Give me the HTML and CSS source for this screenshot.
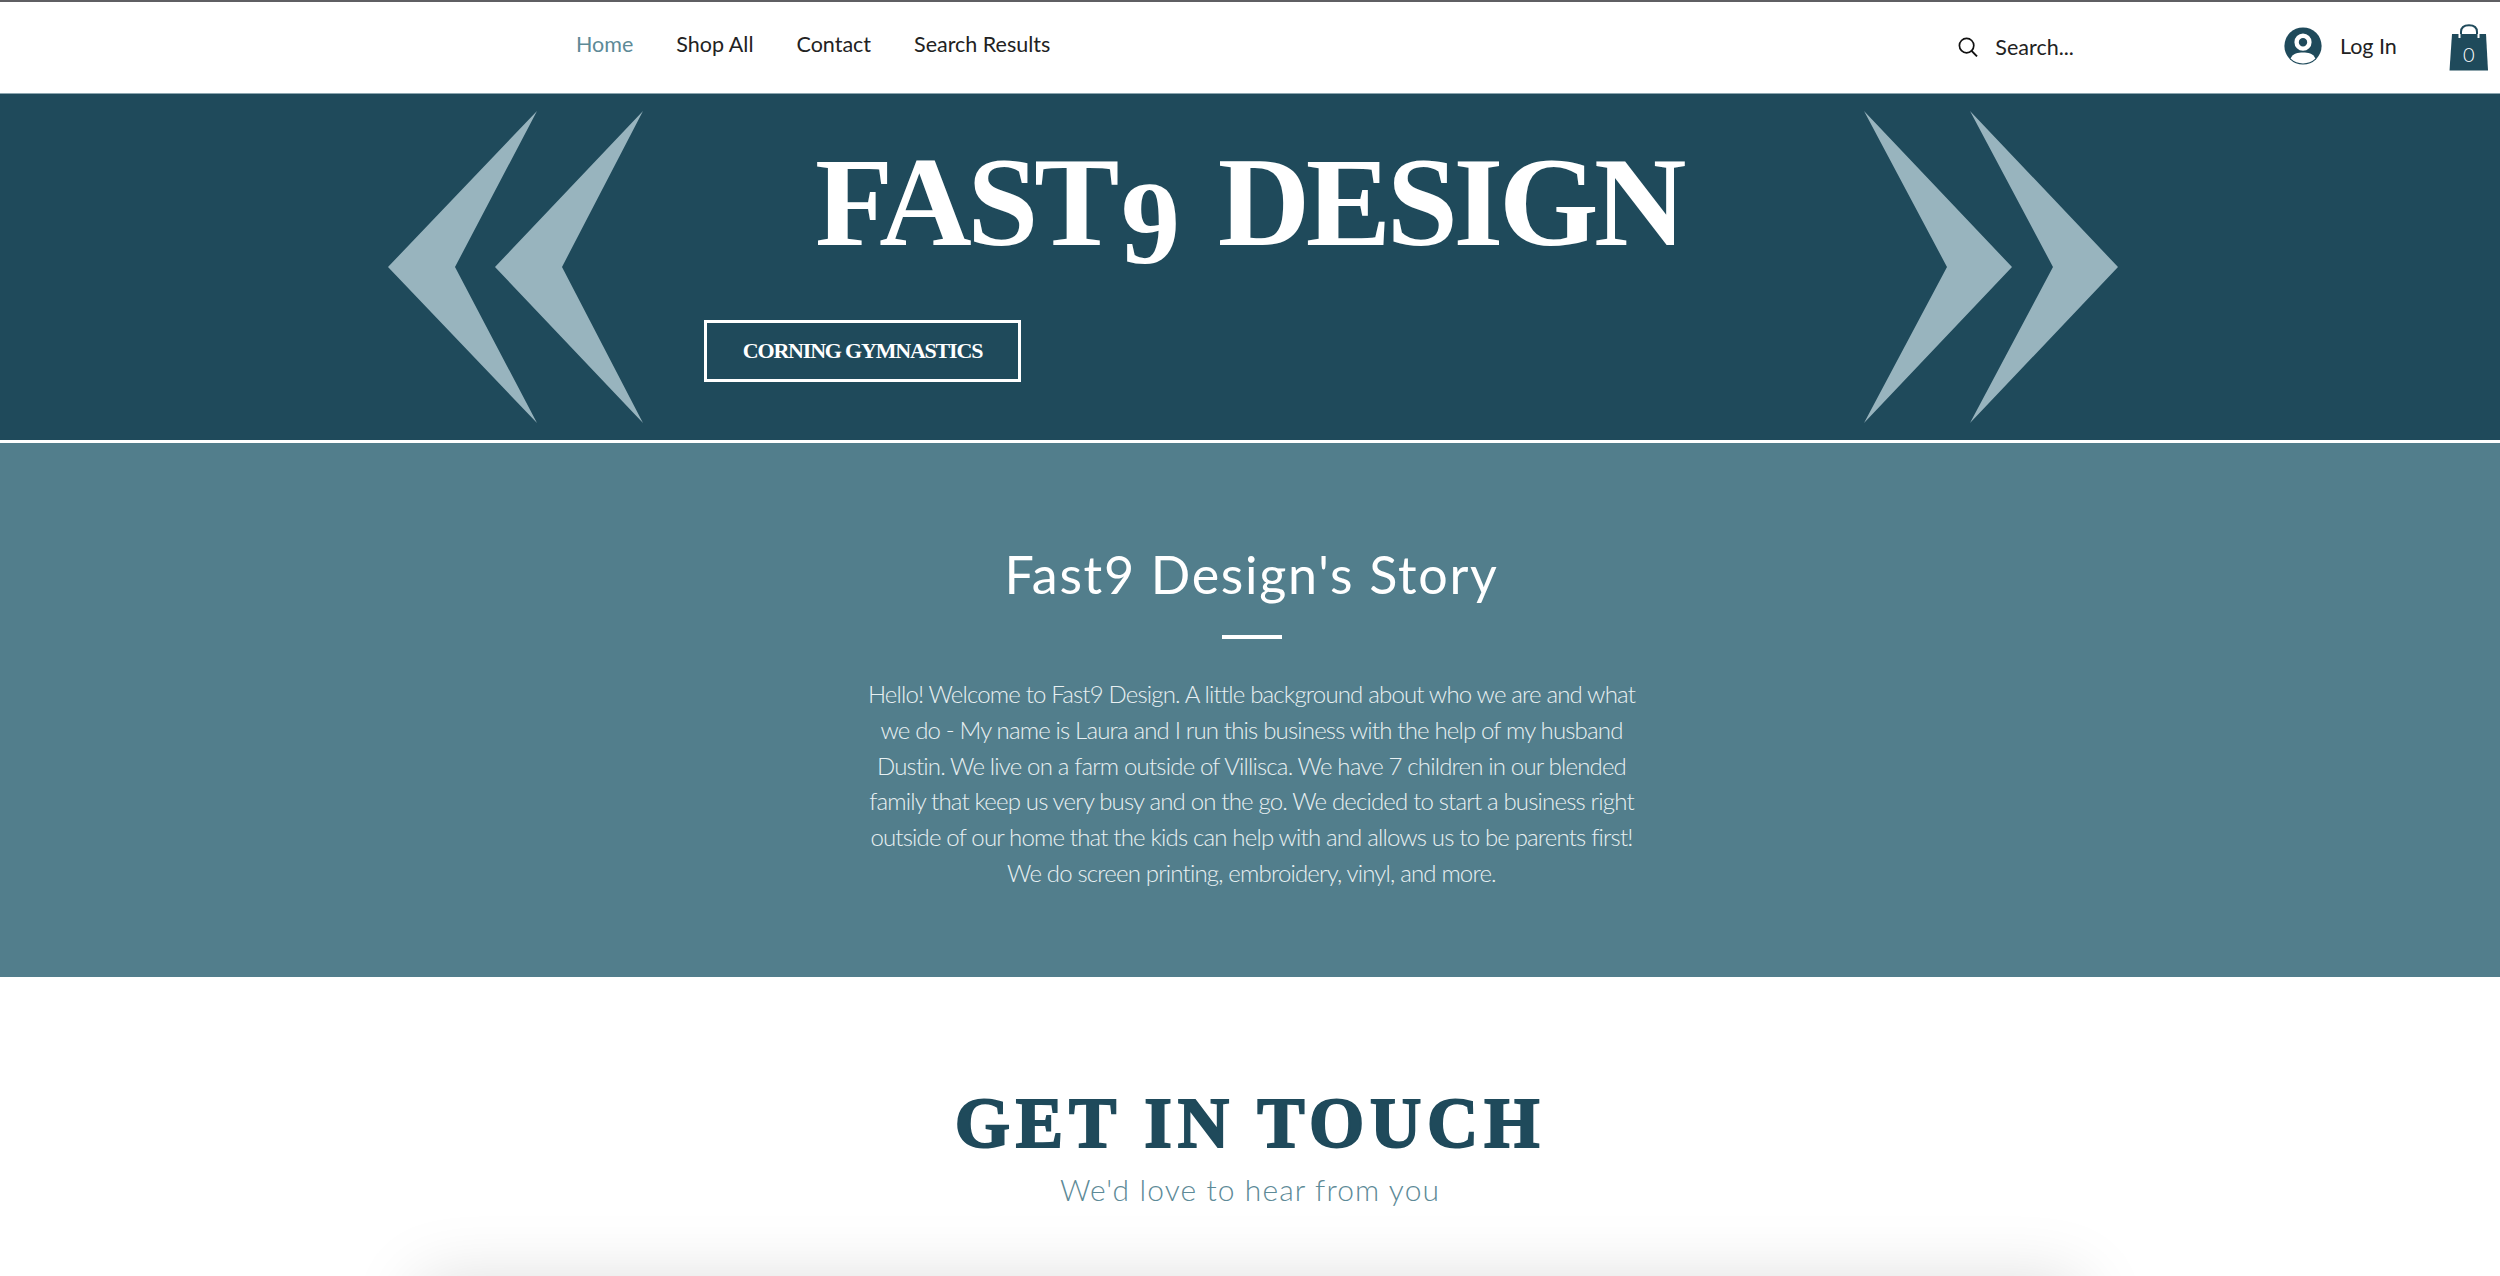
FILE: index.html
```html
<!DOCTYPE html>
<html>
<head>
    <title>Fast9 Design</title>
    <meta charset="UTF-8">
    <link rel="stylesheet" href="styles.css">
</head>
<body>
    <header class="site-header">
        <nav class="main-nav">
            <a class="nav-link active" href="#">Home</a>
            <a class="nav-link" href="#">Shop All</a>
            <a class="nav-link" href="#">Contact</a>
            <a class="nav-link" href="#">Search Results</a>
        </nav>
        <div class="search-box">
            <svg class="search-icon" viewBox="0 0 20 20" width="20" height="20">
                <circle cx="8.6" cy="8.6" r="7.2" fill="none" stroke="#111" stroke-width="1.7"/>
                <path d="M13.6 13.8 L19 19.4" fill="none" stroke="#111" stroke-width="1.9"/>
            </svg>
            <span class="search-text">Search...</span>
        </div>
        <div class="login">
            <svg class="avatar" viewBox="0 0 38 38" width="38" height="38">
                <circle cx="19" cy="19" r="18.6" fill="#1f4a5b"/>
                <circle cx="19" cy="15.2" r="6.4" fill="none" stroke="#fff" stroke-width="4.4"/>
                <path d="M6.6 31.6 C9 26 14 25.4 19 25.4 C24 25.4 29 26 31.4 31.6 C28 35 23.5 36.4 19 36.4 C14.5 36.4 10 35 6.6 31.6 Z" fill="#fff"/>
            </svg>
            <span class="login-text">Log In</span>
        </div>
        <div class="cart">
            <svg class="cart-icon" viewBox="0 0 40 47" width="40" height="47">
                <path d="M12 15 V8 C12 3.4 15 1.2 20 1.2 C25 1.2 28 3.4 28 8 V15" fill="none" stroke="#1f4a5b" stroke-width="2"/>
                <path d="M3 10 H37 L39 46.5 H0.5 Z" fill="#1f4a5b"/>
                <path d="M10.5 10 V14 M29.5 10 V14" stroke="#fff" stroke-width="2"/>
            </svg>
            <span class="cart-count">0</span>
        </div>
    </header>

    <section class="banner">
        <svg class="chevrons" viewBox="0 0 256 312" width="256" height="312">
            <polygon points="0,156 149,0 67,156 149,312"/>
            <polygon points="107,156 255,0 174,156 255,312"/>
        </svg>
        <div class="banner-main">
            <h1 class="banner-title">FAST<span class="old-nine">9</span> DESIGN</h1>
            <a class="banner-btn" href="#">CORNING GYMNASTICS</a>
        </div>
        <svg class="chevrons" viewBox="0 0 256 312" width="256" height="312">
            <polygon points="0,0 148,156 0,312 83,156"/>
            <polygon points="106,0 254,156 106,312 189,156"/>
        </svg>
    </section>

    <section class="story">
        <h2 class="story-title">Fast9 Design's Story</h2>
        <div class="story-rule"></div>
        <p class="story-text">
            Hello! Welcome to Fast9 Design. A little background about who we are and what<br>
            we do - My name is Laura and I run this business with the help of my husband<br>
            Dustin. We live on a farm outside of Villisca. We have 7 children in our blended<br>
            family that keep us very busy and on the go. We decided to start a business right<br>
            outside of our home that the kids can help with and allows us to be parents first!<br>
            We do screen printing, embroidery, vinyl, and more.
        </p>
    </section>

    <section class="contact">
        <h2 class="contact-title">GET IN TOUCH</h2>
        <p class="contact-sub">We'd love to hear from you</p>
        <div class="contact-card"></div>
    </section>
</body>
</html>
```

FILE: styles.css
```css
html, body {
    height: 1276px;
    overflow: hidden;
}

body {
    margin: 0;
    font-family: "Lato", sans-serif;
    background-color: #fff;
}

/* header */
.site-header {
    display: flex;
    align-items: center;
    height: 91px;
    border-top: 2px solid #5f5f63;
    border-bottom: 1px solid #8aa5af;
    background: #fff;
}

.main-nav {
    display: flex;
    gap: 43px;
    margin-left: 576px;
    margin-top: -8px;
}

.nav-link {
    font-size: 21.5px;
    color: #222;
    text-decoration: none;
}

.nav-link.active {
    color: #5d8a97;
}

.search-box {
    display: flex;
    align-items: center;
    gap: 17px;
    margin-left: 908px;
    margin-top: -1px;
}

.search-icon {
    display: block;
}

.search-text {
    font-size: 21.5px;
    color: #222;
}

.login {
    display: flex;
    align-items: center;
    gap: 18px;
    margin-left: 210px;
    margin-top: -3px;
}

.avatar {
    display: block;
}

.login-text {
    font-size: 21.5px;
    color: #222;
}

.cart {
    position: relative;
    margin-left: 52px;
    width: 40px;
    height: 47px;
}

.cart-icon {
    display: block;
}

.cart-count {
    position: absolute;
    left: 0;
    right: 0;
    top: 18px;
    text-align: center;
    font-size: 20px;
    font-weight: 300;
    color: #fff;
}

/* banner */
.banner {
    display: flex;
    align-items: center;
    box-sizing: border-box;
    height: 346px;
    padding-left: 388px;
    background-color: #1f4a5b;
}

.chevrons {
    display: block;
    flex: none;
}

.chevrons polygon {
    fill: #98b4be;
}

.banner-main {
    flex: none;
    display: flex;
    flex-direction: column;
    align-items: flex-start;
    box-sizing: border-box;
    width: 1220px;
    height: 346px;
    padding-left: 60px;
}

.banner-title {
    margin: 43px 0 0 111px;
    font-family: "Liberation Serif", serif;
    font-size: 128px;
    line-height: 130px;
    font-weight: 700;
    letter-spacing: -4.4px;
    color: #fff;
    white-space: nowrap;
}

.old-nine {
    font-size: 118px;
    letter-spacing: 0;
    margin: 0 10px 0 6px;
    position: relative;
    top: 18px;
}

.banner-btn {
    margin-top: 49px;
    box-sizing: border-box;
    width: 317px;
    height: 62px;
    border: 3px solid #fff;
    text-align: center;
    line-height: 56px;
    font-family: "Liberation Serif", serif;
    font-size: 22px;
    font-weight: 700;
    letter-spacing: -1.2px;
    color: #fff;
    text-decoration: none;
    white-space: nowrap;
}

/* story */
.story {
    box-sizing: border-box;
    height: 534px;
    margin-top: 3px;
    padding-left: 3px;
    background-color: #527e8c;
    text-align: center;
    color: #fff;
}

.story-title {
    margin: 0;
    padding-top: 99px;
    font-size: 52px;
    line-height: 64px;
    font-weight: 400;
    letter-spacing: 1.7px;
}

.story-rule {
    width: 60px;
    height: 4px;
    margin: 29px auto 0;
    background: #fff;
}

.story-text {
    margin: 37px 0 0;
    font-size: 24px;
    line-height: 35.8px;
    font-weight: 300;
    letter-spacing: -0.83px;
    color: #e8f0f2;
}

/* contact */
.contact {
    height: 299px;
    overflow: hidden;
    text-align: center;
}

.contact-title {
    margin: 110px 0 0;
    font-family: "Liberation Serif", serif;
    font-size: 71px;
    line-height: 72px;
    font-weight: 700;
    letter-spacing: 5.8px;
    color: #1f4a5b;
    -webkit-text-stroke: 2px #1f4a5b;
}

.contact-sub {
    margin: 11px 0 0;
    font-size: 30px;
    line-height: 38px;
    font-weight: 300;
    letter-spacing: 1.1px;
    color: #5d8a97;
}

.contact-card {
    width: 1660px;
    height: 200px;
    margin: 74px auto 0;
    background: #fff;
    box-shadow: 0 0 70px rgba(0, 0, 0, 0.15);
}
```
